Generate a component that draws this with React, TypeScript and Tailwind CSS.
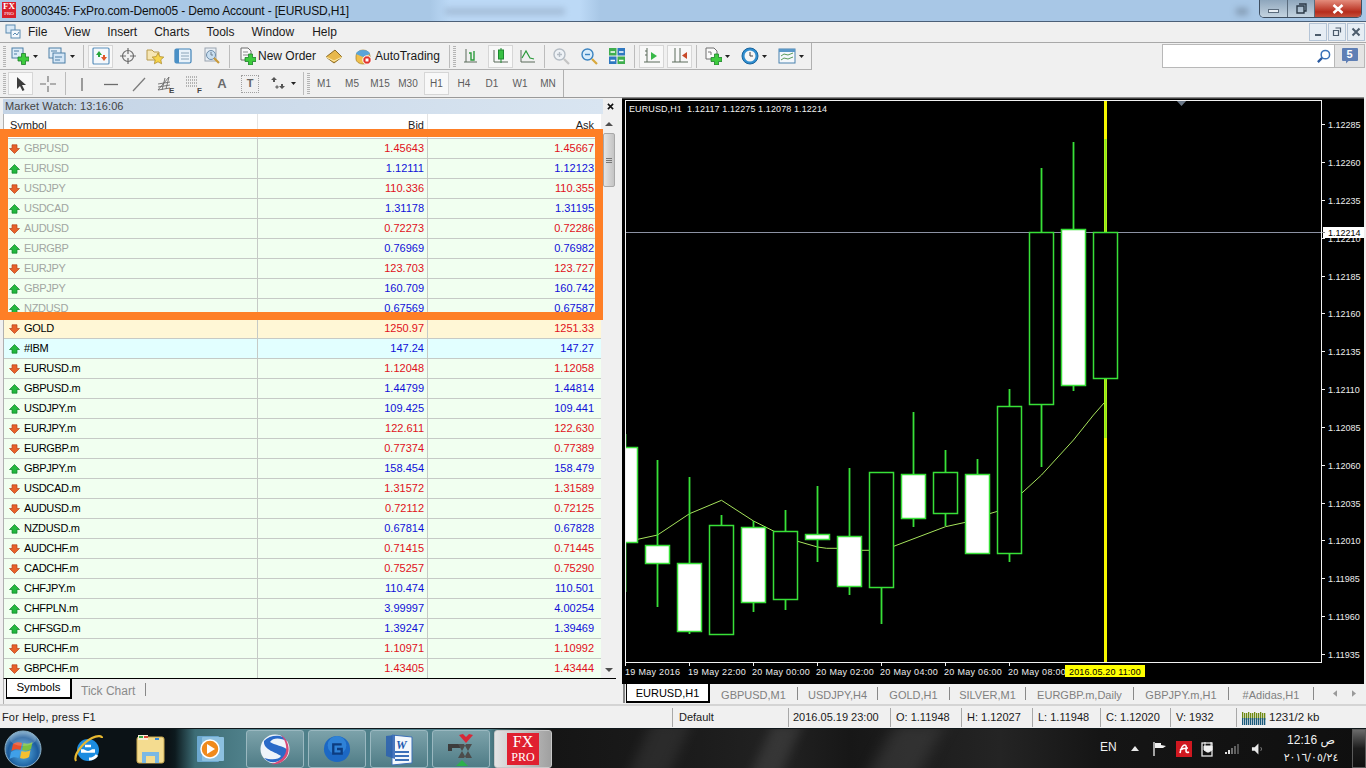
import React from "react";

type Row = { s: string; d: "u" | "d"; b: string; a: string; k?: "g" | "o" | "c" };
const rows: Row[] = [
  { s: "GBPUSD", d: "d", b: "1.45643", a: "1.45667", k: "g" },
  { s: "EURUSD", d: "u", b: "1.12111", a: "1.12123", k: "g" },
  { s: "USDJPY", d: "d", b: "110.336", a: "110.355", k: "g" },
  { s: "USDCAD", d: "u", b: "1.31178", a: "1.31195", k: "g" },
  { s: "AUDUSD", d: "d", b: "0.72273", a: "0.72286", k: "g" },
  { s: "EURGBP", d: "u", b: "0.76969", a: "0.76982", k: "g" },
  { s: "EURJPY", d: "d", b: "123.703", a: "123.727", k: "g" },
  { s: "GBPJPY", d: "u", b: "160.709", a: "160.742", k: "g" },
  { s: "NZDUSD", d: "u", b: "0.67569", a: "0.67587", k: "g" },
  { s: "GOLD", d: "d", b: "1250.97", a: "1251.33", k: "o" },
  { s: "#IBM", d: "u", b: "147.24", a: "147.27", k: "c" },
  { s: "EURUSD.m", d: "d", b: "1.12048", a: "1.12058" },
  { s: "GBPUSD.m", d: "u", b: "1.44799", a: "1.44814" },
  { s: "USDJPY.m", d: "u", b: "109.425", a: "109.441" },
  { s: "EURJPY.m", d: "d", b: "122.611", a: "122.630" },
  { s: "EURGBP.m", d: "d", b: "0.77374", a: "0.77389" },
  { s: "GBPJPY.m", d: "u", b: "158.454", a: "158.479" },
  { s: "USDCAD.m", d: "d", b: "1.31572", a: "1.31589" },
  { s: "AUDUSD.m", d: "d", b: "0.72112", a: "0.72125" },
  { s: "NZDUSD.m", d: "u", b: "0.67814", a: "0.67828" },
  { s: "AUDCHF.m", d: "d", b: "0.71415", a: "0.71445" },
  { s: "CADCHF.m", d: "d", b: "0.75257", a: "0.75290" },
  { s: "CHFJPY.m", d: "u", b: "110.474", a: "110.501" },
  { s: "CHFPLN.m", d: "u", b: "3.99997", a: "4.00254" },
  { s: "CHFSGD.m", d: "u", b: "1.39247", a: "1.39469" },
  { s: "EURCHF.m", d: "d", b: "1.10971", a: "1.10992" },
  { s: "GBPCHF.m", d: "d", b: "1.43405", a: "1.43444" },
];

function Ico({ c, children }: { c?: string; children: React.ReactNode }) {
  return (
    <svg viewBox="0 0 18 18" className={`w-[18px] h-[18px] shrink-0 ${c ?? ""}`}>
      {children}
    </svg>
  );
}
const Plus = ({ x = 0, y = 0 }: { x?: number; y?: number }) => (
  <path
    transform={`translate(${x} ${y})`}
    d="M3.5 0h4v3.5H11v4H7.5V11h-4V7.5H0v-4h3.5z"
    fill="#3ecb3e"
    stroke="#1c7f2a"
    strokeWidth="0.8"
  />
);
const Grip = ({ c }: { c?: string }) => (
  <div className={`w-[3px] h-[21px] shrink-0 bg-[repeating-linear-gradient(0deg,#b4b4b4_0,#b4b4b4_1px,#f0f0f0_1px,#f0f0f0_2px)] ${c ?? ""}`} />
);
const Sep = ({ c }: { c: string }) => <div className={`w-px h-[23px] shrink-0 bg-[#bcbcbc] ${c}`} />;
const Drop = ({ c }: { c: string }) => (
  <svg viewBox="0 0 5 3" className={`w-[5px] h-[3px] shrink-0 ${c}`}>
    <path d="M0 0h5L2.5 3z" fill="#222" />
  </svg>
);
const Act = ({ c, children }: { c: string; children: React.ReactNode }) => (
  <div className={`w-[25px] h-[23px] shrink-0 flex items-center justify-center bg-[#f8f8f8] border border-[#d6d6d6] ${c}`}>{children}</div>
);

const Arrow = ({ d }: { d: "u" | "d" }) => (
  <svg viewBox="0 0 11 10" className="w-[11px] h-[10px] shrink-0">
    {d === "d" ? (
      <path d="M3 0.8h5v3.700h2.500L5.500 9.500 0.500 4.500H3z" fill="#e8622a" stroke="#b8401a" strokeWidth="0.7" />
    ) : (
      <path d="M5.500 0.500l5 5H8v3.700H3V5.500H0.500z" fill="#22b83e" stroke="#10802a" strokeWidth="0.7" />
    )}
  </svg>
);

const G = "#38e038";
type C = { n: number; o: number; h: number; w1: number; w2: number; f: boolean };
const candles: C[] = [
  { n: 0, o: 447, h: 542, w1: 434, w2: 592, f: true },
  { n: 1, o: 545, h: 563, w1: 460, w2: 607, f: true },
  { n: 2, o: 563, h: 631, w1: 477, w2: 634, f: true },
  { n: 3, o: 525, h: 634, w1: 515, w2: 634, f: false },
  { n: 4, o: 527, h: 602, w1: 521, w2: 612, f: true },
  { n: 5, o: 531, h: 599, w1: 510, w2: 610, f: false },
  { n: 6, o: 534, h: 539, w1: 486, w2: 562, f: true },
  { n: 7, o: 536, h: 586, w1: 468, w2: 595, f: true },
  { n: 8, o: 472, h: 587, w1: 472, w2: 624, f: false },
  { n: 9, o: 474, h: 518, w1: 412, w2: 527, f: true },
  { n: 10, o: 472, h: 513, w1: 450, w2: 526, f: false },
  { n: 11, o: 474, h: 553, w1: 459, w2: 553, f: true },
  { n: 12, o: 406, h: 553, w1: 389, w2: 562, f: false },
  { n: 13, o: 232, h: 404, w1: 168, w2: 467, f: false },
  { n: 14, o: 229, h: 385, w1: 142, w2: 391, f: true },
  { n: 15, o: 232, h: 378, w1: 139, w2: 438, f: false },
];
const prices: [string, number][] = [
  ["1.12285", 124], ["1.12260", 162], ["1.12235", 200], ["1.12210", 238], ["1.12185", 276],
  ["1.12160", 313], ["1.12135", 351], ["1.12110", 389], ["1.12085", 427], ["1.12060", 465],
  ["1.12035", 503], ["1.12010", 540], ["1.11985", 578], ["1.11960", 616], ["1.11935", 654],
];
const times: [string, number][] = [
  ["19 May 2016", 625], ["19 May 22:00", 689], ["20 May 00:00", 753], ["20 May 02:00", 817],
  ["20 May 04:00", 881], ["20 May 06:00", 945], ["20 May 08:00", 1009],
];

function Chart() {
  return (
    <svg viewBox="622 97 742 587" className="w-[742px] h-[587px] block bg-black [font-family:'Liberation_Sans',sans-serif]">
      <defs>
        <clipPath id="plot"><rect x="625" y="100" width="696" height="562" /></clipPath>
      </defs>
      <rect x="622" y="97" width="742" height="1.5" fill="#8a8a8a" />
      <g clipPath="url(#plot)">
        <polyline
          fill="none"
          stroke="#a6e45c"
          strokeWidth="1"
          points="630,541 657.5,535 689.5,513.7 721.5,500.3 753.5,521 773.5,531 797.7,541.3 817.5,547 826.7,548.3 837.5,548.3 861.5,550.3 869.5,550.3 893.7,546.3 945.5,526.7 965.5,522.3 989.5,513.7 997.5,511.3 1017.5,497 1041.5,475 1073.5,440 1093.5,415 1104,403"
        />
        <rect x="625" y="232" width="696" height="1" fill="#8c92a4" />
        <rect x="1104" y="100" width="3" height="562" fill="#f5f500" />
        <rect x="1104" y="139" width="3" height="299" fill="#d0f010" />
        {candles.map((k) => {
          const x = 625 + k.n * 32;
          return (
            <g key={k.n}>
              <rect x={x - 0.4} y={k.w1} width="1.8" height={k.w2 - k.w1} fill={k.n === 15 ? "#86e820" : G} />
              <rect x={x - 12 + 0.5} y={k.o + 0.5} width="24" height={k.h - k.o} fill={k.f ? "#fff" : "#000"} stroke={G} strokeWidth="1.5" />
            </g>
          );
        })}
        <path d="M1176 100h11l-5.5 6z" fill="#6b7888" />
      </g>
      <rect x="625.5" y="100.5" width="696" height="562" fill="none" stroke="#f2f2f2" strokeWidth="1" shapeRendering="crispEdges" />
      <text x="629" y="112" className="text-[9px] fill-[#f0f0f0] tracking-[0.1px] whitespace-pre">EURUSD,H1  1.12117 1.12275 1.12078 1.12214</text>
      {prices.map(([p, y]) => (
        <g key={p}>
          <rect x="1322" y={y} width="3" height="1" fill="#f2f2f2" />
          <text x="1328" y={y + 4} className="text-[9px] fill-[#ececec]">{p}</text>
        </g>
      ))}
      <rect x="1323" y="227" width="42" height="11" fill="#fff" />
      <rect x="1322" y="232" width="3" height="1" fill="#888" />
      <text x="1328" y="236" className="text-[9px] fill-black">1.12214</text>
      {times.map(([t, x], i) => (
        <g key={t}>
          <rect x={x} y="662" width="1" height="4" fill="#f2f2f2" />
          <text x={i === 0 ? x : x - 1} y="675" className="text-[9px] fill-[#ececec] tracking-[0.3px]">{t}</text>
        </g>
      ))}
      <rect x="1065" y="665" width="80" height="12" fill="#ffff00" />
      <text x="1069" y="675" className="text-[9px] fill-black tracking-[0.15px]">2016.05.20 11:00</text>
    </svg>
  );
}

export default function App() {
  return (
    <div className="relative w-[1366px] h-[768px] overflow-hidden flex flex-col bg-[#f0f0f0] text-black [font-family:'Liberation_Sans',sans-serif]">
      {/* title bar */}
      <div className="relative h-[22px] shrink-0 flex items-start border-b border-[#4c6078] bg-[linear-gradient(90deg,#a9c8e6_0,#a9c8e6_430px,#bcd9f6_450px,#bcd9f6_580px,#a8c7e6_600px,#a8c7e6_100%)]">
        <div className="absolute left-[445px] top-[8px] w-[120px] h-[7px] bg-[#6b7a90] opacity-30 blur-[3px]" />
        <div className="absolute left-[1236px] top-[8px] w-[12px] h-[7px] bg-[#5e6e80] opacity-50 blur-[3px]" />
        <div className="ml-[2px] mt-[2px] w-[14px] h-[16px] bg-[#d9202c] text-white flex flex-col items-center leading-none [font-family:'Liberation_Serif',serif]">
          <span className="block text-[9px] font-bold leading-[9px]">FX</span>
          <span className="block text-[5px] leading-[6px]">PRO</span>
        </div>
        <span className="ml-[5px] text-[12px] leading-[22px] tracking-[-0.15px] text-[#101010] whitespace-nowrap">8000345: FxPro.com-Demo05 - Demo Account - [EURUSD,H1]</span>
        <div className="ml-auto mr-[4px] flex h-[18px] rounded-b-[5px] overflow-hidden border border-t-0 border-[#3e4e60] z-10">
          <div className="w-[28px] flex items-center justify-center bg-[linear-gradient(180deg,#8ea6bc,#c4d3e0)] border-r border-[#5a6b7c]">
            <div className="w-[11px] h-[4px] bg-[#e8eef4] border border-[#5a6b7c] mt-[4px]" />
          </div>
          <div className="w-[27px] flex items-center justify-center bg-[linear-gradient(180deg,#8ea6bc,#c4d3e0)] border-r border-[#5a6b7c]">
            <svg viewBox="0 0 11 11" className="w-[11px] h-[11px]"><path d="M3 1h7v7H8M1 3h7v7H1z" fill="none" stroke="#2c3a48" strokeWidth="1.4" /></svg>
          </div>
          <div className="w-[46px] flex items-center justify-center bg-[linear-gradient(180deg,#e48c7c,#b62c1c_70%,#c4503c)]">
            <svg viewBox="0 0 12 10" className="w-[12px] h-[10px]"><path d="M1.5 1l9 8M10.5 1l-9 8" stroke="#fff" strokeWidth="2.6" /></svg>
          </div>
        </div>
      </div>

      {/* menu */}
      <div className="h-[21px] shrink-0 flex items-center border-b border-[#a8a8a8]">
        <svg viewBox="0 0 16 16" className="ml-[5px] w-[16px] h-[16px] shrink-0">
          <rect x="1" y="1" width="9" height="8" fill="#d8e8f6" stroke="#5a8ab0" />
          <rect x="6" y="6" width="9" height="8" fill="#f4f8fc" stroke="#5a8ab0" />
          <path d="M8 11l2-2 2 2 2-3" fill="none" stroke="#5a8ab0" />
        </svg>
        <div className="ml-[7px] flex gap-[17px] text-[12px] text-[#1a1a1a]">
          <span>File</span><span>View</span><span>Insert</span><span>Charts</span><span>Tools</span><span>Window</span><span className="ml-[1px]">Help</span>
        </div>
        <div className="ml-auto mr-[1px] flex gap-[1px]">
          {[0, 1, 2].map((i) => (
            <div key={i} className="w-[18px] h-[18px] flex items-center justify-center bg-[#e6edf4] border border-[#b4c4d6]">
              <svg viewBox="0 0 10 10" className="w-[10px] h-[10px]">
                {i === 0 && <path d="M2 8h6" stroke="#4c5c6c" strokeWidth="2" />}
                {i === 1 && <path d="M3.5 1h5v4.5M1.5 3.5h5v5h-5z" fill="none" stroke="#4c5c6c" strokeWidth="1.2" />}
                {i === 2 && <path d="M1.5 1.5l7 7M8.5 1.5l-7 7" stroke="#4c5c6c" strokeWidth="2" />}
              </svg>
            </div>
          ))}
        </div>
      </div>

      {/* toolbar 1 */}
      <div className="h-[27px] shrink-0 flex items-start">
        <div className="w-[812px] h-[27px] shrink-0 flex items-center pl-[3px] border-b border-r border-[#b0b0b0]">
          <Grip />
          <Ico c="ml-[5px]"><rect x="1" y="1" width="11" height="10" fill="#dcebf8" stroke="#4d7fa6" /><path d="M3 4h5M3 7h3" stroke="#4d7fa6" /><Plus x={7} y={6.5} /></Ico>
          <Drop c="ml-[4px]" />
          <Ico c="ml-[10px]"><rect x="1" y="1" width="12" height="10" fill="#e2eef8" stroke="#4d7fa6" /><rect x="5" y="6" width="12" height="10" fill="#d4e6f6" stroke="#4d7fa6" /><path d="M3 4h6M7 10h7M7 13h5" stroke="#4d7fa6" /></Ico>
          <Drop c="ml-[4px]" />
          <Sep c="ml-[8px]" />
          <Act c="ml-[4px]">
            <Ico><rect x="1" y="1" width="16" height="16" rx="1" fill="#f4f8fc" stroke="#5a90bc" strokeWidth="1.2" /><path d="M4 8l3-4 3 4H8v2H6V8z" fill="#27a63c" /><path d="M9 10h2V8h2v2h2l-3 4z" fill="#e0582a" /></Ico>
          </Act>
          <Ico c="ml-[6px]"><circle cx="9" cy="9" r="5.5" fill="none" stroke="#6c6c6c" strokeWidth="1.2" /><path d="M9 1v6M9 11v6M1 9h6M11 9h6" stroke="#6c6c6c" strokeWidth="1.2" /></Ico>
          <Ico c="ml-[9px]"><path d="M1 3h5l2 2h5v8H1z" fill="#f6e6b4" stroke="#b89a4c" /><path d="M12 6l1.8 3.6 4 .5-3 2.7.8 4-3.6-2-3.6 2 .8-4-3-2.7 4-.5z" fill="#f6d44c" stroke="#a88420" strokeWidth="0.7" /></Ico>
          <Ico c="ml-[10px]"><rect x="1" y="2" width="16" height="14" rx="1.5" fill="#e8f2fa" stroke="#3e82b8" strokeWidth="1.2" /><rect x="1" y="2" width="4" height="14" fill="#4a90c6" /><path d="M7 6h8M7 9h8M7 12h8" stroke="#8aa4b8" /></Ico>
          <Ico c="ml-[11px]"><rect x="2" y="1" width="11" height="13" fill="#e8eef4" stroke="#9aa4b0" /><circle cx="8" cy="8" r="4.5" fill="#c8def0" stroke="#6e8ca8" /><path d="M8 5v3h2" stroke="#6e7e8e" fill="none" /><path d="M11 11l5 5" stroke="#c89a3c" strokeWidth="2.2" /></Ico>
          <Sep c="ml-[8px]" />
          <Ico c="ml-[8px]"><path d="M3 1h7l3 3v9H3z" fill="#fafafa" stroke="#6e6e6e" /><path d="M5 5h5M5 8h5" stroke="#8a8a8a" /><Plus x={7} y={7} /></Ico>
          <span className="ml-[2px] w-[58px] shrink-0 text-[12px] text-[#1a1a1a] whitespace-nowrap">New Order</span>
          <Ico c="ml-[9px]"><path d="M1 10l9-7 7 7-8 6z" fill="#e8b84c" stroke="#8a6a24" /><path d="M1 10l8 4 8-4" fill="none" stroke="#fff0b8" /></Ico>
          <Ico c="ml-[11px]"><path d="M2 9a7 6 0 0 1 14 0v3a7 5 0 0 1-14 0z" fill="#f0c04c" stroke="#a07c24" strokeWidth="0.7" /><path d="M2 7a7 4 0 0 1 14 0l-7 3z" fill="#5aa4d8" /><circle cx="13" cy="13" r="4.2" fill="#e0322a" stroke="#fff" /><rect x="11.5" y="11.5" width="3" height="3" fill="#fff" /></Ico>
          <span className="ml-[3px] w-[67px] shrink-0 text-[12px] text-[#1a1a1a] whitespace-nowrap">AutoTrading</span>
          <Sep c="ml-[7px]" />
          <Grip c="ml-[3px]" />
          <Ico c="ml-[7px]"><path d="M3 2v13M14 15H1" stroke="#5a6a5a" /><path d="M6 6h2v7h3V4" fill="none" stroke="#2a9a3a" strokeWidth="1.4" /></Ico>
          <Act c="ml-[7px]">
            <Ico><path d="M2 3v12h14" stroke="#5a6a5a" fill="none" /><path d="M9 1v15" stroke="#1e8a30" /><rect x="6.5" y="3" width="5" height="9" fill="#38c044" stroke="#1e8a30" /></Ico>
          </Act>
          <Ico c="ml-[6px]"><path d="M2 3v12h14" stroke="#5a6a5a" fill="none" /><path d="M3 11l4-7 4 7 4 1" fill="none" stroke="#2a9a3a" strokeWidth="1.2" /></Ico>
          <Sep c="ml-[7px]" />
          <Ico c="ml-[7px]"><circle cx="7.5" cy="7.5" r="5.5" fill="#eef2f6" stroke="#b4bcc4" strokeWidth="1.4" /><path d="M5 7.5h5M7.5 5v5" stroke="#b4bcc4" strokeWidth="1.4" /><path d="M12 12l5 5" stroke="#c4c4c4" strokeWidth="2.2" /></Ico>
          <Ico c="ml-[10px]"><circle cx="7.5" cy="7.5" r="5.5" fill="#d8ecfa" stroke="#3c84c0" strokeWidth="1.4" /><path d="M5 7.5h5" stroke="#3c84c0" strokeWidth="1.4" /><path d="M12 12l5 5" stroke="#d8a83c" strokeWidth="2.2" /></Ico>
          <Ico c="ml-[10px]"><rect x="1" y="1" width="7.5" height="7.5" fill="#3fae4e" /><rect x="9.5" y="1" width="7.5" height="7.5" fill="#2f78c0" /><rect x="1" y="9.5" width="7.5" height="7.5" fill="#2f78c0" /><rect x="9.5" y="9.5" width="7.5" height="7.5" fill="#3fae4e" /><path d="M2.5 5h4.5M11 5h4.5M2.5 13.500h4.500M11 13.500h4.500" stroke="#fff" strokeWidth="1.6" /></Ico>
          <Sep c="ml-[8px]" />
          <Act c="ml-[4px]">
            <Ico><path d="M4 1v14M1 15h16" stroke="#5a6a5a" fill="none" /><path d="M8 5l6 4-6 4z" fill="#38b848" /><path d="M4 4h-2M4 8h-2" stroke="#5a6a5a" /></Ico>
          </Act>
          <Act c="ml-[3px]">
            <Ico><path d="M4 1v14M9 1v14M1 15h16" stroke="#5a6a5a" fill="none" /><path d="M16 5l-5 3.500 5 3.500z" fill="#c84a2a" /></Ico>
          </Act>
          <Sep c="ml-[4px]" />
          <Ico c="ml-[7px]"><path d="M2 1h8l3 3v8H2z" fill="#fafafa" stroke="#6e6e6e" /><path d="M4 5h3v3" fill="none" stroke="#777" /><Plus x={7} y={7} /></Ico>
          <Drop c="ml-[3px]" />
          <Ico c="ml-[11px]"><circle cx="9" cy="9" r="8" fill="#2f8ed0" stroke="#18639c" /><circle cx="9" cy="9" r="5.500" fill="#f6f6f6" /><path d="M9 5v4h3" fill="none" stroke="#444" /></Ico>
          <Drop c="ml-[3px]" />
          <Ico c="ml-[11px]"><rect x="1" y="2" width="16" height="14" fill="#f4f8fc" stroke="#4a82ae" /><rect x="1" y="2" width="16" height="3" fill="#5a98c8" /><path d="M3 9l3-2 4 1 5-2M3 13l3-2 4 1 5-2" fill="none" stroke="#5a9a5a" /></Ico>
          <Drop c="ml-[3px]" />
        </div>
        <div className="ml-[350px] mt-[1px] w-[173px] h-[24px] shrink-0 bg-white border border-[#b8b8b8] flex items-center justify-end pr-[3px]">
          <svg viewBox="0 0 16 16" className="w-[15px] h-[15px]"><circle cx="10" cy="6" r="4.5" fill="none" stroke="#3a72b8" strokeWidth="1.6" /><path d="M6.500 9.500L2 14" stroke="#2a5aa0" strokeWidth="2.4" /></svg>
        </div>
        <div className="mt-[1px] w-[30px] h-[24px] shrink-0 bg-[#e4e4e4] border border-l-0 border-[#b8b8b8] flex items-center justify-center">
          <div className="relative w-[16px] h-[13px] mb-[3px] rounded-[1px] bg-[#5f7fb5] text-white text-[11px] font-bold leading-[13px] text-center">5
            <div className="absolute left-[4px] top-[12px] w-[4px] h-[4px] bg-[#5f7fb5] [clip-path:polygon(0_0,100%_0,0_100%)]" />
          </div>
        </div>
      </div>

      {/* toolbar 2 */}
      <div className="h-[27px] shrink-0 flex items-center">
        <div className="w-[564px] h-[27px] shrink-0 flex items-center pl-[3px] border-r border-[#b0b0b0]">
          <Grip />
          <Act c="ml-[2px]">
            <svg viewBox="0 0 12 16" className="w-[12px] h-[16px]"><path d="M2 1v12l3-3 2.500 5 2-1-2.500-5h4z" fill="#3c3c3c" /></svg>
          </Act>
          <Ico c="ml-[6px]"><path d="M9 1v6M9 11v6M1 9h6M11 9h6" stroke="#6c6c6c" strokeWidth="1.1" /></Ico>
          <Sep c="ml-[8px]" />
          <Ico c="ml-[7px]"><path d="M9 3v13" stroke="#6c6c6c" strokeWidth="1.3" /></Ico>
          <Ico c="ml-[11px]"><path d="M2 9.500h14" stroke="#6c6c6c" strokeWidth="1.3" /></Ico>
          <Ico c="ml-[10px]"><path d="M3 16L15 3" stroke="#7c7c7c" strokeWidth="1.3" /></Ico>
          <Ico c="ml-[9px]"><path d="M1 9l12-2M1 12l12-2M1 15l12-2M5 15l3-12M9 14l3-12M1 15L12 2" stroke="#6c6c6c" strokeWidth="0.9" /><text x="12" y="17.500" className="text-[8px] font-bold fill-[#444]">E</text></Ico>
          <Ico c="ml-[10px]"><path d="M1 2h12M1 5h12M1 8h12M1 11h12" stroke="#777" strokeWidth="1" strokeDasharray="1 1" /><text x="12" y="17.500" className="text-[8px] font-bold fill-[#444]">F</text></Ico>
          <span className="ml-[10px] w-[18px] shrink-0 text-center text-[13px] font-bold text-[#6c6c6c]">A</span>
          <div className="ml-[10px] w-[18px] h-[18px] shrink-0 flex items-center justify-center border border-dotted border-[#a0a0a0] text-[11px] font-bold leading-none text-[#666]">T</div>
          <Ico c="ml-[10px]"><path d="M2 5l3-3 3 3H6v2H4V5zM10 11h2V9h2v2h2l-3 3z" fill="#555" /><path d="M6 12l2-2 2 2-2 2z" fill="#777" /></Ico>
          <Drop c="ml-[4px]" />
          <Sep c="ml-[7px]" />
          <Grip c="ml-[3px]" />
          {["M1", "M5", "M15", "M30"].map((t) => (
            <span key={t} className="w-[28px] shrink-0 text-center text-[10px] text-[#5c5c5c]">{t}</span>
          ))}
          <Act c="ml-[2px] text-[10px] text-[#5c5c5c]">H1</Act>
          <div className="ml-px flex">
            {["H4", "D1", "W1", "MN"].map((t) => (
              <span key={t} className="w-[28px] shrink-0 text-center text-[10px] text-[#5c5c5c]">{t}</span>
            ))}
          </div>
        </div>
      </div>

      {/* main */}
      <div className="h-[607px] shrink-0 flex">
        <div className="w-[622px] shrink-0 flex flex-col border-t border-[#9a9a9a]">
          <div className="h-[16px] shrink-0 flex items-end">
            <div className="ml-[3px] w-[600px] h-[15px] bg-[linear-gradient(90deg,#c3d3e5,#d9e5f1)] text-[11px] leading-[14px] pl-[2px] text-[#444] tracking-[0.1px]">Market Watch: 13:16:06</div>
            <svg viewBox="0 0 8 8" className="ml-[4px] mb-[4px] w-[7px] h-[7px]"><path d="M1 1l6 6M7 1L1 7" stroke="#111" strokeWidth="1.8" /></svg>
          </div>
          <div className="flex ml-[3px] w-[614px] h-[564px] shrink-0 overflow-hidden border-l border-[#b0b0b0]">
            <div className="w-[597px] shrink-0 bg-white">
              <div className="h-[25px] flex text-[11px] border-b border-[#c8c8c8] bg-white text-[#222]">
                <div className="w-[254px] pl-[6px] pt-[3px] border-r border-[#e4e4e4]">Symbol</div>
                <div className="w-[170px] pr-[3px] pt-[3px] text-right border-r border-[#e4e4e4]">Bid</div>
                <div className="w-[172px] pr-[6px] pt-[3px] text-right">Ask</div>
              </div>
              {rows.map((r) => {
                const bg = r.k === "o" ? "bg-[#fff7d6]" : r.k === "c" ? "bg-[#e2ffff]" : "bg-[#f1fff0]";
                const nc = r.k === "g" ? "text-[#a2a6a2]" : "text-black";
                const pc = r.d === "d" ? "text-[#e01020]" : "text-[#1010d8]";
                return (
                  <div key={r.s} className={`h-[20px] flex text-[11px] border-b border-[#c6cac6] ${bg}`}>
                    <div className={`w-[254px] flex items-center pl-[5px] border-r border-[#c6cac6] ${nc}`}>
                      <Arrow d={r.d} />
                      <span className="ml-[4px] tracking-[-0.3px]">{r.s}</span>
                    </div>
                    <div className={`w-[170px] flex items-center justify-end pr-[3px] border-r border-[#c6cac6] ${pc}`}>{r.b}</div>
                    <div className={`w-[172px] flex items-center justify-end pr-[6px] ${pc}`}>{r.a}</div>
                  </div>
                );
              })}
            </div>
            <div className="w-[16px] h-[564px] shrink-0 flex flex-col items-center bg-[#f0f0f0]">
              <svg viewBox="0 0 8 4" className="mt-[8px] w-[8px] h-[4px]"><path d="M0 4h8L4 0z" fill="#505050" /></svg>
              <div className="mt-[7px] w-[12px] h-[54px] flex flex-col items-center justify-center gap-[1px] rounded-[2px] border border-[#a8a8a8] bg-[linear-gradient(90deg,#e4e4e4,#c4c4c4)]">
                <div className="w-[6px] h-px bg-[#777]" /><div className="w-[6px] h-px bg-[#777]" /><div className="w-[6px] h-px bg-[#777]" />
              </div>
              <svg viewBox="0 0 8 4" className="mt-auto mb-[6px] w-[8px] h-[4px]"><path d="M0 0h8L4 4z" fill="#505050" /></svg>
            </div>
          </div>
          <div className="ml-[3px] w-[613px] h-[26px] shrink-0 flex items-start border-l border-t border-t-black border-l-[#b0b0b0] text-[11.5px]">
            <div className="ml-[2px] w-[66px] h-[20px] flex items-center justify-center bg-white border-l border-r-2 border-b-2 border-black">Symbols</div>
            <span className="ml-[9px] mt-[3px] w-[54px] text-[12px] text-[#8a8a8a] whitespace-nowrap">Tick Chart</span>
            <div className="ml-[10px] mt-[4px] w-px h-[13px] bg-[#888]" />
          </div>
        </div>
        <div className="flex-1 flex flex-col">
          <Chart />
          <div className="h-[20px] flex text-[11px] text-[#808080]">
            <div className="ml-[1px] w-[2px] h-[19px] bg-[#888]" />
            <div className="ml-[1px] w-[84px] h-[19px] flex items-center justify-center pt-[2px] bg-white text-black border-r-2 border-b-2 border-black border-l">EURUSD,H1</div>
            {[
              ["GBPUSD,M1", "w-[88px]"],
              ["USDJPY,H4", "w-[80px]"],
              ["GOLD,H1", "w-[72px]"],
              ["SILVER,M1", "w-[76px]"],
              ["EURGBP.m,Daily", "w-[108px]"],
              ["GBPJPY.m,H1", "w-[95px]"],
              ["#Adidas,H1", "w-[85px]"],
            ].map(([t, w]) => (
              <div key={t} className={`${w} h-[19px] flex items-center`}>
                <span className="flex-1 text-center whitespace-nowrap pt-[3px]">{t}</span>
                <div className="w-px h-[13px] bg-[#888]" />
              </div>
            ))}
            <svg viewBox="0 0 5 8" className="ml-[19px] mt-[6px] w-[4px] h-[7px]"><path d="M5 0v8L0 4z" fill="#999" /></svg>
            <svg viewBox="0 0 5 8" className="ml-[15px] mt-[6px] w-[4px] h-[7px]"><path d="M0 0v8l5-4z" fill="#999" /></svg>
          </div>
        </div>
      </div>

      {/* status bar */}
      <div className="h-[24px] shrink-0 flex items-center pt-[1px] border-t-2 border-[#d4d4d4] text-[11px] text-[#1a1a1a]">
        <div className="w-[672px] shrink-0 pl-[2px] tracking-[0.15px]">For Help, press F1</div>
        <div className="w-[116px] shrink-0 pl-[6px] h-[19px] leading-[19px] border-l border-[#a8a8a8]">Default</div>
        <div className="w-[102px] shrink-0 pl-[4px] h-[19px] leading-[19px] border-l border-[#a8a8a8] whitespace-nowrap">2016.05.19 23:00</div>
        <div className="w-[71px] shrink-0 pl-[5px] h-[19px] leading-[19px] border-l border-[#a8a8a8] whitespace-nowrap">O: 1.11948</div>
        <div className="w-[71px] shrink-0 pl-[5px] h-[19px] leading-[19px] border-l border-[#a8a8a8] whitespace-nowrap">H: 1.12027</div>
        <div className="w-[68px] shrink-0 pl-[5px] h-[19px] leading-[19px] border-l border-[#a8a8a8] whitespace-nowrap">L: 1.11948</div>
        <div className="w-[70px] shrink-0 pl-[5px] h-[19px] leading-[19px] border-l border-[#a8a8a8] whitespace-nowrap">C: 1.12020</div>
        <div className="w-[66px] shrink-0 pl-[5px] h-[19px] leading-[19px] border-l border-[#a8a8a8] whitespace-nowrap">V: 1932</div>
        <div className="pl-[5px] h-[19px] flex items-center border-l border-[#a8a8a8] whitespace-nowrap">
          <svg viewBox="0 0 24 14" className="w-[24px] h-[14px] shrink-0">
            {Array.from({ length: 12 }).map((_, i) => (
              <g key={i}>
                <rect x={i * 2} y={2 - (i % 3 === 0 ? 1 : 0)} width="1.300" height="7" fill="#6f8a12" />
                <rect x={i * 2} y={7} width="1.300" height="7" fill="#1a5a7c" />
              </g>
            ))}
          </svg>
          <span className="ml-[3px] text-[11.5px]">1231/2 kb</span>
        </div>
      </div>

      {/* taskbar */}
      <div className="relative h-[40px] shrink-0 flex items-center overflow-hidden border-t border-[#10181c] bg-[linear-gradient(90deg,#0b1216_0,#0b1216_168px,#0d1a1e_175px,#3d6d76_195px,#4f808a_245px,#4f808a_490px,#3c5c60_500px,#151515_552px,#1c1c1c_700px,#222222_780px,#171717_850px,#242424_1000px,#151515_1100px,#0f0f0f_1366px)]">
        <div className="absolute left-[640px] top-[-10px] w-[40px] h-[60px] bg-[#3c3c3c] opacity-50 blur-[7px] skew-x-[-24deg]" />
        <div className="absolute left-[760px] top-[-6px] w-[30px] h-[60px] bg-[#4a4a4a] opacity-50 blur-[6px] skew-x-[-24deg]" />
        <div className="absolute left-[880px] top-[-6px] w-[50px] h-[60px] bg-[#464646] opacity-50 blur-[8px] skew-x-[-28deg]" />
        <svg viewBox="0 0 40 40" className="ml-[3px] w-[40px] h-[40px] shrink-0">
          <defs>
            <radialGradient id="orb" cx="50%" cy="60%" r="60%"><stop offset="0" stopColor="#5ab4e8" /><stop offset="0.7" stopColor="#1c5c9c" /><stop offset="1" stopColor="#7aa8c8" /></radialGradient>
          </defs>
          <circle cx="20" cy="20" r="18" fill="url(#orb)" stroke="#8ab0c8" />
          <path d="M10 15c3-2 6-2 9-1l-1.500 7c-3-1-6-1-9 1z" fill="#e8502c" />
          <path d="M20.500 14c3 1 6 1 9-1l-1.500 7c-3 2-6 2-9 1z" fill="#7cc040" />
          <path d="M8 23c3-2 6-2 9-1l-1.500 7c-3-1-6-1-9 1z" fill="#40a0e8" />
          <path d="M18.500 22c3 1 6 1 9-1l-1.500 7c-3 2-6 2-9 1z" fill="#f4c030" />
          <ellipse cx="20" cy="10" rx="13" ry="7" fill="#fff" opacity="0.18" />
        </svg>
        <svg viewBox="0 0 36 36" className="ml-[27px] w-[36px] h-[36px] shrink-0">
          <circle cx="18" cy="19" r="11" fill="#1c8ce0" />
          <path d="M11 20h14" stroke="#fff" strokeWidth="3.500" />
          <path d="M27 24c-2 3-5 4-8 4" stroke="#fff" strokeWidth="3" fill="none" />
          <circle cx="18" cy="15" r="5" fill="#1c8ce0" />
          <path d="M15 15h6" stroke="#fff" strokeWidth="2.500" />
          <path d="M6 30c-3-5 6-18 16-23 6-3 10-2 10 0" fill="none" stroke="#e8b830" strokeWidth="2.200" />
        </svg>
        <svg viewBox="0 0 34 34" className="ml-[28px] w-[34px] h-[34px] shrink-0">
          <rect x="3" y="5" width="27" height="26" rx="2" fill="#f4dc90" stroke="#c8a850" />
          <rect x="4" y="3" width="10" height="5" fill="#f8f0d8" />
          <rect x="5" y="4" width="4" height="2" fill="#3ca848" /><rect x="10" y="4" width="4" height="2" fill="#d84a3a" /><rect x="21" y="6" width="4" height="2" fill="#3a8ad8" />
          <rect x="8" y="20" width="17" height="11" fill="#7ab8e4" />
          <rect x="12" y="24" width="9" height="7" fill="#f4dc90" />
        </svg>
        <svg viewBox="0 0 30 30" className="ml-[27px] w-[30px] h-[30px] shrink-0">
          <rect x="2" y="2" width="22" height="26" rx="1" fill="#6ca8d0" />
          <rect x="7" y="3" width="22" height="24" rx="1" fill="#8cc0e0" />
          <circle cx="15" cy="15" r="9" fill="#f08a1c" stroke="#fff" strokeWidth="1.500" />
          <path d="M12 10l8 5-8 5z" fill="#fff" />
        </svg>
        <div className="ml-[21px] w-[58px] h-[38px] shrink-0 flex items-center justify-center rounded-[3px] border border-[#9ab8c0] bg-[linear-gradient(180deg,#7ca2aa,#4f7c86)]">
          <svg viewBox="0 0 32 34" className="w-[32px] h-[34px]">
            <circle cx="16" cy="17" r="14.500" fill="#eef4fa" />
            <path d="M5 9c6-7 20-7 23 0-6-3-14-4-17 1 4 3 14 4 18 8C26 30 12 34 5 26c7 2 15 2 17-2-5-4-18-6-17-15z" fill="#2a6ac8" />
            <path d="M22 3c7 4 11 16 4 24-3 4-9 6-14 5 6-1 14-6 15-13 1-7-2-12-5-16z" fill="#d84a78" />
          </svg>
        </div>
        <div className="ml-[4px] w-[58px] h-[38px] shrink-0 flex items-center justify-center rounded-[3px] border border-[#9ab8c0] bg-[linear-gradient(180deg,#7ca2aa,#4f7c86)]">
          <svg viewBox="0 0 30 30" className="w-[28px] h-[28px]">
            <circle cx="15" cy="15" r="14" fill="#1c68c4" />
            <circle cx="15" cy="11" r="10" fill="#3c94e4" opacity="0.6" />
            <path d="M20 10H11v10h9v-5h-5" fill="none" stroke="#0c3c80" strokeWidth="2.500" />
          </svg>
        </div>
        <div className="ml-[4px] w-[58px] h-[38px] shrink-0 flex items-center justify-center rounded-[3px] border border-[#9ab8c0] bg-[linear-gradient(180deg,#7ca2aa,#4f7c86)]">
          <svg viewBox="0 0 32 34" className="w-[32px] h-[34px]">
            <path d="M9 3l20 2v26l-20 2z" fill="#f4f8fc" stroke="#3c70b8" />
            <path d="M12 20h14M12 24h14M12 28h14" stroke="#3c70b8" strokeWidth="1.800" />
            <path d="M3 4l9-1v24l-9-3z" fill="#2a60b0" opacity="0.85" />
            <text x="13" y="17" className="text-[12px] font-bold italic fill-[#1c58b0] [font-family:'Liberation_Serif',serif]">W</text>
          </svg>
        </div>
        <div className="ml-[4px] w-[58px] h-[38px] shrink-0 flex items-center justify-center rounded-[3px] border border-[#9ab8c0] bg-[linear-gradient(180deg,#7ca2aa,#4f7c86)]">
          <svg viewBox="0 0 34 34" className="w-[34px] h-[34px]">
            <path d="M15 3l4-1 3 3 3-3 4 1-7 8z" fill="#d82838" />
            <path d="M4 12h12v4H8v3H4z" fill="#3c3c3c" />
            <path d="M14 12h6l8 14h-6zM28 12h-6l-8 14h6z" fill="#4c4c4c" />
            <path d="M18 28l6 6H12z" fill="#2cb04c" />
          </svg>
        </div>
        <div className="ml-[4px] w-[58px] h-[38px] shrink-0 flex items-center justify-center rounded-[3px] border border-[#c8c8c8] bg-[linear-gradient(90deg,#e4e4e4,#a0a0a0)]">
          <div className="w-[32px] h-[32px] bg-[#e02030] text-white flex flex-col items-center justify-center [font-family:'Liberation_Serif',serif]">
            <span className="block text-[16px] leading-[16px]">FX</span>
            <span className="block text-[12px] leading-[14px]">PRO</span>
          </div>
        </div>

        <span className="relative ml-[548px] text-[12px] text-[#f0f0f0] w-[16px] mb-[4px]">EN</span>
        <svg viewBox="0 0 8 5" className="ml-[15px] w-[8px] h-[5px] shrink-0"><path d="M0 5h8L4 0z" fill="#e8e8e8" /></svg>
        <svg viewBox="0 0 14 14" className="ml-[14px] w-[14px] h-[14px] shrink-0"><path d="M1 0v14" stroke="#f0f0f0" strokeWidth="1.300" /><path d="M2 1h6v2l5 1-3 2H2z" fill="#f0f0f0" /></svg>
        <div className="ml-[9px] w-[16px] h-[16px] shrink-0 bg-[#d01820] flex items-center justify-center">
          <svg viewBox="0 0 12 12" className="w-[12px] h-[12px]"><path d="M2 10C3 5 5 2 7 2c2 0 1 5 1 6s1 2 3 1M2 7c3-2 6-2 8-2" fill="none" stroke="#fff" strokeWidth="1.600" /></svg>
        </div>
        <svg viewBox="0 0 14 16" className="ml-[9px] w-[14px] h-[16px] shrink-0"><rect x="1" y="2" width="10" height="13" fill="none" stroke="#e8e8e8" strokeWidth="1.300" /><path d="M4 1v4M10 1v4M3 5h8v4l-3 2H6L3 9z" fill="#f0f0f0" stroke="#f0f0f0" /></svg>
        <svg viewBox="0 0 14 12" className="ml-[10px] w-[14px] h-[12px] shrink-0">
          <rect x="0" y="9" width="2" height="2" fill="#e0e0e0" /><rect x="3" y="7" width="2" height="4" fill="#e0e0e0" /><rect x="6" y="5" width="2" height="6" fill="#707070" /><rect x="9" y="3" width="2" height="8" fill="#606060" /><rect x="12" y="1" width="2" height="10" fill="#505050" />
        </svg>
        <svg viewBox="0 0 14 14" className="ml-[12px] w-[13px] h-[14px] shrink-0"><path d="M1 5h3l4-4v12l-4-4H1z" fill="#e8e8e8" /><path d="M10.500 5a3 3 0 0 1 0 4" stroke="#888" fill="none" /></svg>
        <div className="ml-[15px] w-[64px] shrink-0 flex flex-col items-center text-[#f0f0f0] leading-[17px]">
          <span className="text-[12px] [font-family:'Liberation_Sans','DejaVu_Sans',sans-serif] whitespace-nowrap">12:16 ص</span>
          <span className="text-[11px] [font-family:'DejaVu_Sans',sans-serif] whitespace-nowrap">٢٠١٦/٠٥/٢٤</span>
        </div>
        <div className="ml-auto w-[14px] h-[39px] shrink-0 border border-[#5a5a5a] bg-[linear-gradient(180deg,#6a6a6a,#1c1c1c_50%,#101010)]" />
      </div>

      {/* orange highlight drawn over the watch list */}
      <div className="absolute left-0 top-[129px] w-[603px] h-[191px] border-[8px] border-[#fe7f26] pointer-events-none" />
    </div>
  );
}
